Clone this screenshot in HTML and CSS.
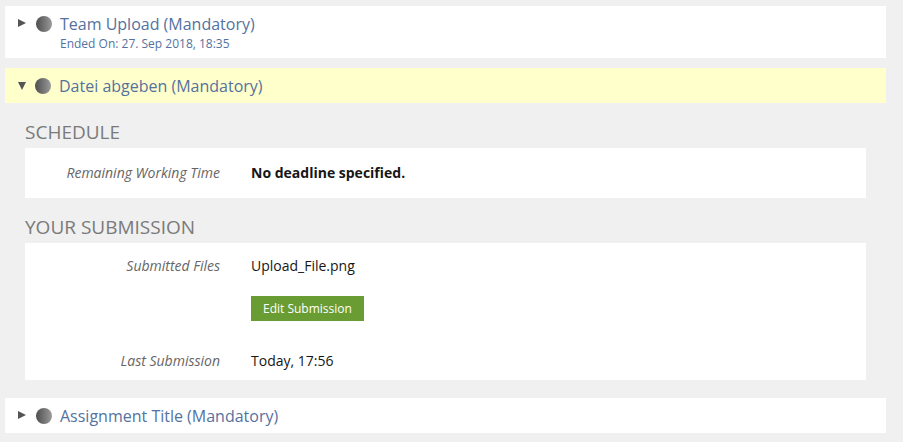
FILE: index.html
```html
<!DOCTYPE html>
<html lang="en">

<head>
    <meta charset="UTF-8">
    <meta name="viewport" content="width=device-width, initial-scale=1.0">
    <title>Assignments</title>

    <link rel="stylesheet" href="styles.css">
</head>

<body>
    <div class="page">

        <div class="item">
            <div class="item-head">
                <span class="toggle right"></span>
                <span class="status"></span>
                <div class="item-text">
                    <a class="item-title" href="#">Team Upload (Mandatory)</a>
                    <div class="item-sub">Ended On: 27. Sep 2018, 18:35</div>
                </div>
            </div>
        </div>

        <div class="item open">
            <div class="item-head">
                <span class="toggle down"></span>
                <span class="status"></span>
                <div class="item-text">
                    <a class="item-title" href="#">Datei abgeben (Mandatory)</a>
                </div>
            </div>
        </div>

        <div class="item-body">
            <h3 class="section">Schedule</h3>
            <div class="panel">
                <div class="prop">
                    <div class="prop-label">Remaining Working Time</div>
                    <div class="prop-value"><b>No deadline specified.</b></div>
                </div>
            </div>

            <h3 class="section">Your Submission</h3>
            <div class="panel panel-sub">
                <div class="prop">
                    <div class="prop-label">Submitted Files</div>
                    <div class="prop-value">
                        Upload_File.png
                        <div><button class="btn">Edit Submission</button></div>
                    </div>
                </div>
                <div class="prop">
                    <div class="prop-label">Last Submission</div>
                    <div class="prop-value">Today, 17:56</div>
                </div>
            </div>
        </div>

        <div class="item">
            <div class="item-head">
                <span class="toggle right"></span>
                <span class="status"></span>
                <div class="item-text">
                    <a class="item-title" href="#">Assignment Title (Mandatory)</a>
                </div>
            </div>
        </div>

    </div>
</body>

</html>
```

FILE: styles.css
```css
* {
    margin: 0;
    padding: 0;
    box-sizing: border-box;
}

body {
    background-color: #f0f0f0;
    font-family: "Open Sans", "Liberation Sans", sans-serif;
    color: #161616;
}

.page {
    padding: 6px 17px 0 5px;
}

.item {
    background-color: white;
    margin-bottom: 10px;
}

.item.open {
    background-color: #ffffcc;
}

.item-head {
    display: flex;
    align-items: flex-start;
    padding: 8px 10px 7px 13px;
}

.toggle {
    width: 0;
    height: 0;
    margin-right: 10px;
    flex-shrink: 0;
}

.toggle.right {
    border-top: 4.5px solid transparent;
    border-bottom: 4.5px solid transparent;
    border-left: 8px solid #555;
    margin-top: 5px;
}

.toggle.down {
    border-left: 4.5px solid transparent;
    border-right: 4.5px solid transparent;
    border-top: 8px solid #555;
    margin-top: 6px;
    margin-right: 9px;
}

.status {
    width: 16px;
    height: 16px;
    border-radius: 50%;
    background: linear-gradient(to right, #4e4e4e, #9a9a9a);
    margin-top: 2px;
    margin-right: 8px;
    flex-shrink: 0;
}

.item-title {
    display: block;
    font-size: 16px;
    line-height: 20px;
    color: #54729f;
    text-decoration: none;
}

.item-sub {
    font-size: 12px;
    line-height: 15px;
    margin-top: 2px;
    color: #54729f;
}

.item-body {
    padding: 7px 20px 1px 20px;
}

.section {
    font-size: 19px;
    font-weight: normal;
    text-transform: uppercase;
    color: #7a7a7a;
    line-height: 24px;
    margin-bottom: 4px;
}

.panel {
    background-color: white;
    padding: 15px 0 15px 0;
    margin-bottom: 17px;
}

.panel-sub {
    padding-top: 13px;
    padding-bottom: 9px;
}

.prop {
    display: flex;
    font-size: 14px;
    line-height: 20px;
}

.prop + .prop {
    margin-top: 30px;
}

.prop-label {
    width: 195px;
    text-align: right;
    font-style: italic;
    color: #666;
    padding-right: 31px;
    box-sizing: content-box;
}

.prop-value {
    color: #161616;
}

.btn {
    margin-top: 20px;
    background-color: #6a9c34;
    color: white;
    border: none;
    font-family: "Open Sans", "Liberation Sans", sans-serif;
    font-size: 12px;
    line-height: 25px;
    height: 25px;
    padding: 0 12px;
    cursor: pointer;
}
```
